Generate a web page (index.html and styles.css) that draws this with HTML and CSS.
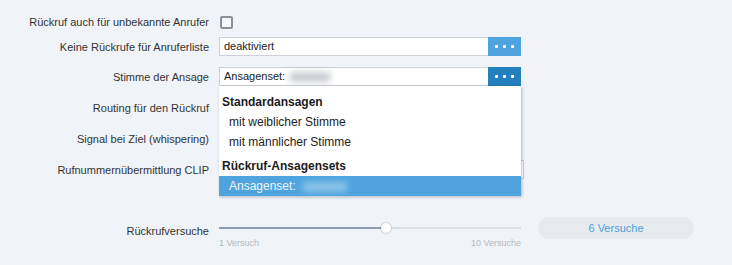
FILE: index.html
```html
<!DOCTYPE html>
<html lang="de">
<head>
  <meta charset="UTF-8">
  <title>Rückruf</title>
  <link rel="stylesheet" href="styles.css">
</head>
<body>

<div class="settings">
  <div class="row row-check">
    <label class="row-label">Rückruf auch für unbekannte Anrufer</label>
    <span class="checkbox"></span>
  </div>

  <div class="row row-input">
    <label class="row-label">Keine Rückrufe für Anruferliste</label>
    <div class="picker">
      <div class="picker-value">deaktiviert</div>
      <button class="picker-btn light"><i></i><i></i><i></i></button>
    </div>
  </div>

  <div class="row row-input">
    <label class="row-label">Stimme der Ansage</label>
    <div class="picker open">
      <div class="picker-value">Ansagenset: <span class="blur"></span></div>
      <button class="picker-btn dark"><i></i><i></i><i></i></button>

      <div class="menu">
        <div class="menu-head">Standardansagen</div>
        <div class="menu-item">mit weiblicher Stimme</div>
        <div class="menu-item">mit männlicher Stimme</div>
        <div class="menu-head second">Rückruf-Ansagensets</div>
        <div class="menu-item selected">Ansagenset: <span class="blur"></span></div>
      </div>
    </div>
  </div>

  <div class="row row-tall">
    <label class="row-label">Routing für den Rückruf</label>
  </div>

  <div class="row row-tall">
    <label class="row-label">Signal bei Ziel (whispering)</label>
  </div>

  <div class="row row-input">
    <label class="row-label">Rufnummernübermittlung CLIP</label>
    <div class="select-box"></div>
  </div>

  <div class="row row-slider">
    <label class="row-label">Rückrufversuche</label>
    <div class="slider">
      <div class="track">
        <div class="track-fill" style="width: 55.3%"></div>
        <span class="thumb"></span>
      </div>
      <div class="scale">
        <span>1 Versuch</span>
        <span>10 Versuche</span>
      </div>
    </div>
    <div class="pill">6 Versuche</div>
  </div>
</div>

</body>
</html>
```

FILE: styles.css
```css
body {
  margin: 0;
  background: #f0f3f8;
  font-family: "Liberation Sans", Arial, sans-serif;
  font-size: 11px;
  color: #333;
}
.settings {
  padding-top: 13px;
}
.row {
  display: flex;
  align-items: center;
}
.row-label {
  width: 209px;
  margin-right: 10px;
  text-align: right;
  flex-shrink: 0;
}
.row-check {
  height: 18px;
}
.row-input {
  height: 19px;
  margin-top: 11px;
}
.row-check + .row-input {
  margin-top: 6px;
}
.row-tall {
  height: 20px;
  margin-top: 12px;
}
.row-tall + .row-tall,
.row-tall + .row-input {
  margin-top: 11px;
}
.checkbox {
  display: block;
  width: 9px;
  height: 9px;
  margin-left: 1px;
  border: 2px solid #8b909a;
  border-radius: 2px;
  background: #f6f7fa;
}

/* picker field with the three dot button */
.picker {
  position: relative;
  display: flex;
  width: 302px;
  height: 19px;
}
.picker-value {
  flex: 1;
  box-sizing: border-box;
  height: 19px;
  padding-left: 4px;
  line-height: 17px;
  color: #222;
  background: #fff;
  border: 1px solid #cdd0d7;
  border-right: none;
  white-space: nowrap;
}
.picker-btn {
  display: flex;
  align-items: center;
  justify-content: center;
  gap: 5px;
  width: 33px;
  height: 19px;
  padding: 0;
  border: none;
  cursor: pointer;
}
.picker-btn i {
  display: block;
  width: 3px;
  height: 3px;
  border-radius: 1px;
  background: #fff;
}
.picker-btn.light {
  background: #4fa4df;
}
.picker-btn.dark {
  background: #2380bd;
}
.blur {
  display: inline-block;
  width: 40px;
  height: 10px;
  margin-left: 2px;
  vertical-align: -2px;
  background: #c9ccd2;
  filter: blur(3px);
}

.menu {
  position: absolute;
  top: 19px;
  left: 0;
  z-index: 5;
  width: 302px;
  padding-top: 6px;
  font-size: 12px;
  background: #fff;
  box-shadow: 1px 1px 3px rgba(0,0,0,0.25);
}
.menu-head {
  height: 20px;
  line-height: 20px;
  padding-left: 3px;
  font-weight: bold;
  color: #1c1c1c;
}
.menu-head.second {
  margin-top: 4px;
}
.menu-item {
  height: 20px;
  line-height: 20px;
  padding-left: 10px;
  color: #222;
}
.menu-item.selected {
  background: #4fa4df;
  color: #eef6fc;
}
.menu-item.selected .blur {
  width: 44px;
  margin-left: 4px;
  background: #8cc4ea;
}

.select-box {
  width: 305px;
  height: 19px;
  box-sizing: border-box;
  background: #fff;
  border: 1px solid #cdd0d7;
}

/* slider */
.row-slider {
  align-items: flex-start;
  margin-top: 38px;
}
.row-slider .row-label {
  line-height: 22px;
  padding-top: 3px;
}
.slider {
  width: 302px;
}
.track {
  position: relative;
  height: 22px;
}
.track::before {
  content: "";
  position: absolute;
  left: 0;
  right: 0;
  top: 10px;
  height: 2px;
  background: #dcdee2;
}
.track-fill {
  position: absolute;
  left: 0;
  top: 10px;
  height: 2px;
  background: #8e9bb4;
}
.thumb {
  position: absolute;
  left: 162px;
  top: 6px;
  width: 10px;
  height: 10px;
  border-radius: 50%;
  background: #fff;
  box-shadow: 0 0 2px rgba(0,0,0,0.35);
}
.scale {
  display: flex;
  justify-content: space-between;
  margin-top: -1px;
  font-size: 9px;
  line-height: 11px;
  color: #b4b8bf;
}
.pill {
  width: 156px;
  height: 22px;
  margin-left: 17px;
  line-height: 22px;
  text-align: center;
  border-radius: 11px;
  background: #e7ebf0;
  color: #4a9fdb;
}
```
